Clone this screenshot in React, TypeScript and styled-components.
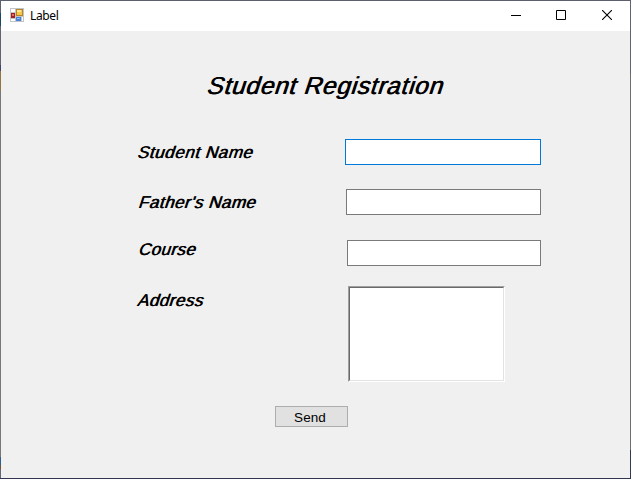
import React from "react";
import styled, { createGlobalStyle } from "styled-components";

const GlobalStyle = createGlobalStyle`
  * { box-sizing: border-box; }
  body { margin: 0; background: #fff; font-family: "Liberation Sans", Arial, sans-serif; color: #000; }
`;

const Desktop = styled.div`
  width: 631px;
  height: 479px;
  padding: 1px;
  background:
    linear-gradient(#5d606e, #5d606e) 0 0 / 100% 1px no-repeat,
    linear-gradient(#323750, #323750) 0 100% / 100% 1px no-repeat,
    linear-gradient(#62656f 0 74px, #707070 74px 450px, #343a50 450px) 100% 0 / 1px 100% no-repeat,
    linear-gradient(#5d606e 0 13px, #1b4767 13px 26px, #62656f 26px 65px, #404765 65px 71px,
      #947448 71px 91px, #777 91px 457px, #315f8c 457px 465px, #754f35 465px 469px, #626775 469px) 0 0 / 1px 100% no-repeat;
`;

const Window = styled.main`
  display: flex;
  flex-direction: column;
  height: 100%;
  background: #f0f0f0;
`;

const TitleBar = styled.header`
  display: flex;
  align-items: flex-start;
  height: 30px;
  background: #fff;
  padding-left: 9px;
`;

const Caption = styled.span`
  flex: 1;
  margin: 7px 0 0 6px;
  font: 12px/16px "Noto Sans", sans-serif;
  letter-spacing: -0.35px;
`;

const CaptionButton = styled.button<{ $width: number }>`
  display: flex;
  align-items: center;
  justify-content: center;
  width: ${(p) => p.$width}px;
  height: 28px;
  border: 0;
  padding: 0;
  background: transparent;
`;

const SlantedText = styled.span<{ $size: number; $spacing: number }>`
  display: inline-block;
  width: max-content;
  font-size: ${(p) => p.$size}px;
  line-height: 26px;
  letter-spacing: ${(p) => p.$spacing}px;
  white-space: nowrap;
  transform: skewX(-18deg);
  text-shadow: 0.7px 0 0 #000;
`;

const Heading = styled.h1`
  margin: 0;
  padding: 42px 0 0 207px;
  height: 108px;
  font-size: 24px;
  font-weight: 400;
  line-height: 26px;
`;

const Field = styled.label<{ $height: number; $labelX: number; $inputX: number }>`
  display: grid;
  grid-template-columns: ${(p) => p.$inputX - p.$labelX}px auto;
  justify-content: start;
  align-items: start;
  height: ${(p) => p.$height}px;
  padding-left: ${(p) => p.$labelX - 1}px;
`;

const TextInput = styled.input<{ $width: number; $active?: boolean }>`
  width: ${(p) => p.$width}px;
  height: 26px;
  border: 1px solid ${(p) => (p.$active ? "#0078d7" : "#7a7a7a")};
  border-radius: 0;
  padding: 2px 4px;
  background: #fff;
  outline: 0;
`;

const AddressFrame = styled.span`
  display: block;
  width: 157px;
  height: 96px;
  border: 1px solid;
  border-color: #a0a0a0 #fff #fff #a0a0a0;
`;

const AddressInput = styled.textarea`
  display: block;
  width: 100%;
  height: 100%;
  border: 1px solid;
  border-color: #696969 #e3e3e3 #e3e3e3 #696969;
  border-radius: 0;
  background: #fff;
  resize: none;
  outline: 0;
`;

const LabelShift = styled.span<{ $top: number }>`
  margin-top: ${(p) => p.$top}px;
  line-height: 0;
`;

const SendButton = styled.button`
  width: 73px;
  height: 21px;
  margin-left: 274px;
  border: 1px solid #adadad;
  padding: 2px 3px 0 0;
  background: #e1e1e1;
  color: #000;
  font: 13.5px/16px "Liberation Sans", Arial, sans-serif;
  letter-spacing: 0.1px;
`;

const AppIcon = styled.svg`
  display: block;
  margin-top: 7px;
`;

const FormIcon = () => (
  <AppIcon width="14" height="14" viewBox="0 0 14 14" shapeRendering="crispEdges">
    <path fill="#c2c4c8" d="M0 0h14v14H0z" />
    <path fill="#fff" d="M1 1h4v3H1zM1 11h4v2H1zM12 9h1v4h-1z" />
    <path fill="#b5852c" d="M6 1h7v7H6z" />
    <path fill="#f8c744" d="M7 2h5v5H7z" />
    <path fill="#ffe894" d="M7 2h4v2H7z" />
    <path fill="#a32020" d="M1 5h4v5H1z" />
    <path fill="#e96b5b" d="M2 6h2v2H2z" />
    <path fill="#4b82d8" d="M6 9h5v4H6z" />
    <path fill="#8bbdf4" d="M7 10h3v1H7z" />
  </AppIcon>
);

const fields = [
  { label: "Student Name", labelX: 138, inputX: 345, width: 196, height: 50, top: 1, spacing: 0.57, active: true },
  { label: "Father's Name", labelX: 139, inputX: 346, width: 195, height: 51, top: 1, spacing: 0.5 },
  { label: "Course", labelX: 139, inputX: 347, width: 194, height: 46, top: -3, spacing: 0.4 },
];

export default function App() {
  return (
    <Desktop>
      <GlobalStyle />
      <Window>
        <TitleBar>
          <FormIcon />
          <Caption>Label</Caption>
          <CaptionButton $width={44} aria-label="Minimize">
            <svg width="10" height="10" shapeRendering="crispEdges"><path fill="#000" d="M0 5h10v1H0z" /></svg>
          </CaptionButton>
          <CaptionButton $width={46} aria-label="Maximize">
            <svg width="10" height="10"><path fill="none" stroke="#000" d="M.5.5h9v9h-9z" /></svg>
          </CaptionButton>
          <CaptionButton $width={46} aria-label="Close">
            <svg width="10" height="10"><path fill="none" stroke="#000" strokeWidth="1.1" d="M0 0l10 10M10 0L0 10" /></svg>
          </CaptionButton>
        </TitleBar>
        <Heading><SlantedText $size={24.5} $spacing={0.72}>Student Registration</SlantedText></Heading>
        {fields.map((f) => (
          <Field key={f.label} $height={f.height} $labelX={f.labelX} $inputX={f.inputX}>
            <LabelShift $top={f.top}><SlantedText $size={17} $spacing={f.spacing}>{f.label}</SlantedText></LabelShift>
            <TextInput $width={f.width} $active={f.active} />
          </Field>
        ))}
        <Field $height={120} $labelX={138} $inputX={348}>
          <LabelShift $top={2}><SlantedText $size={17} $spacing={0.5}>Address</SlantedText></LabelShift>
          <AddressFrame><AddressInput /></AddressFrame>
        </Field>
        <SendButton>Send</SendButton>
      </Window>
    </Desktop>
  );
}
